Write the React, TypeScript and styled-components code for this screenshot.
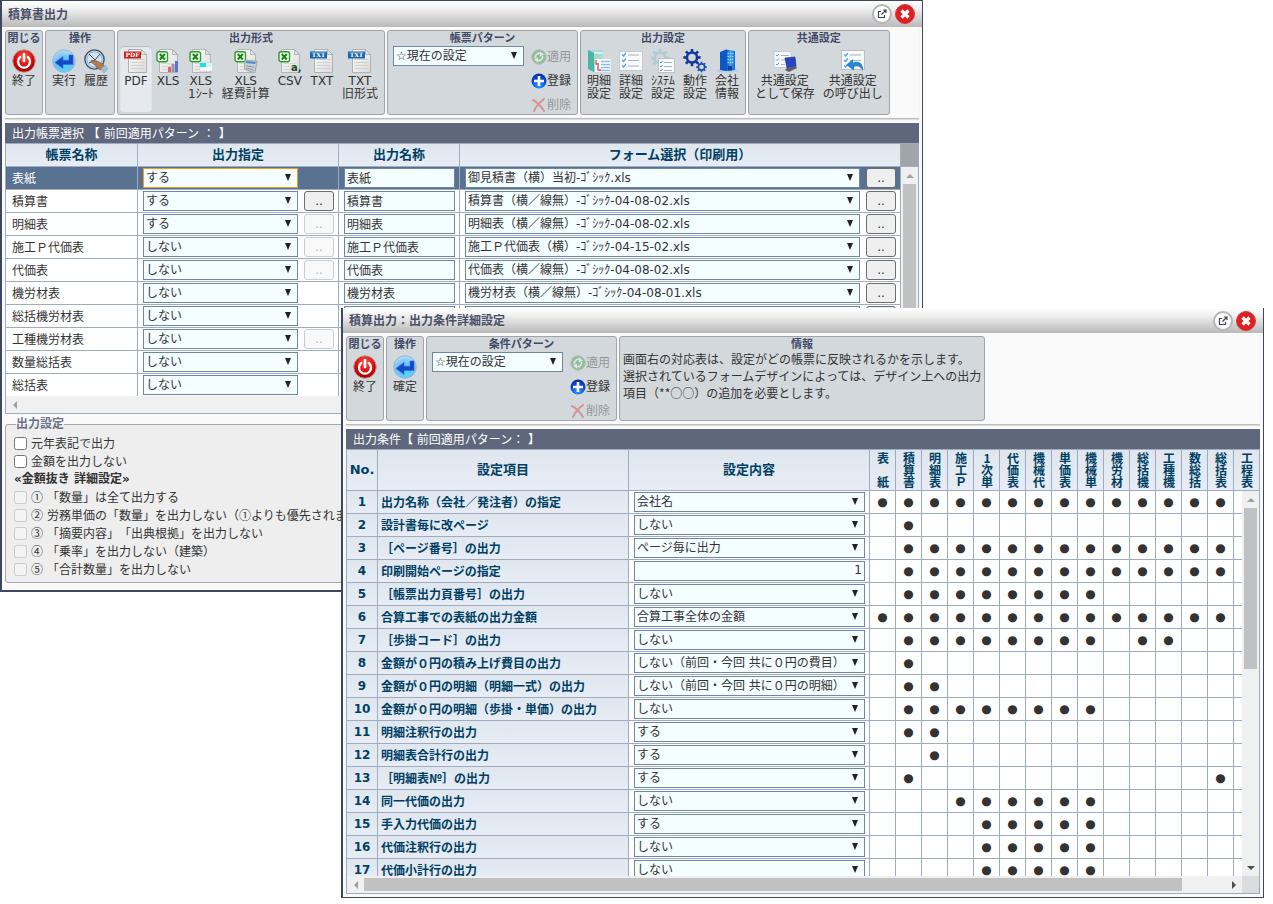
import React, { useId } from 'react';
import styled, { createGlobalStyle, css } from 'styled-components';

const latinFirst = '"DejaVu Sans", "Noto Sans CJK JP", sans-serif';
const kanjiFirst = '"Noto Sans CJK JP", "DejaVu Sans", sans-serif';

const color = {
  frame: '#3d4763',
  line: '#9dacc2',
  control: '#6f87a5',
  controlFill: '#f4fdff',
  heading: '#003f63',
  text: '#333333',
  caption: '#434a66',
  bar: '#5f677c',
};

const GlobalStyle = createGlobalStyle`
  *, *::before, *::after { box-sizing: border-box; }
  body {
    margin: 0;
    background: #ffffff;
    color: ${color.text};
    font: 12px/16px ${latinFirst};
    text-spacing-trim: space-all;
  }
  button, input, select { font: inherit; color: inherit; margin: 0; }
`;

/* ---------- windows ---------- */

const Desktop = styled.main`
  position: relative;
  min-height: 100vh;
  overflow: hidden;
`;

const WindowBox = styled.section<{ $place: 'back' | 'front' }>`
  position: absolute;
  background: #fafafa;
  border: solid ${color.frame};
  ${(p) =>
    p.$place === 'back'
      ? css`
          top: 0;
          left: 0;
          right: 350px;
          border-width: 1px 1px 2px 2px;
          padding-bottom: 7px;
        `
      : css`
          top: 308px;
          left: 341px;
          right: 9px;
          border-width: 0 1px 1px 2px;
          padding-bottom: 3px;
        `}
`;

const TitleBar = styled.header<{ $height: number }>`
  display: flex;
  align-items: center;
  gap: 3px;
  height: ${(p) => p.$height}px;
  padding: 0 7px 0 6px;
  background: linear-gradient(#ffffff, #f0f0f0 30%, #b9b9b9);
`;

const TitleText = styled.h1`
  flex: 1;
  margin: 0;
  padding-bottom: 1px;
  font: 700 12px/16px ${kanjiFirst};
  color: #4a5068;
`;

const RoundButton = styled.button<{ $danger?: boolean }>`
  display: grid;
  place-items: center;
  width: 20px;
  height: 20px;
  padding: 0;
  border: ${(p) => (p.$danger ? '1px solid #c84040' : '2px solid #b4b4b4')};
  border-radius: 50%;
  background: ${(p) => (p.$danger ? '#e02020' : '#ffffff')};
`;

const WindowBody = styled.div`
  padding: 0 3px;
`;

/* ---------- toolbar ---------- */

const Toolbar = styled.div`
  display: flex;
  gap: 2px;
  margin-bottom: 4px;
  padding: 3px 0;
  border-bottom: 1px solid #bcbcbc;
  box-shadow: 0 1px 1px #dddddd;
`;

const Group = styled.div`
  height: 85px;
  flex: none;
  border: 1px solid #a0a4a9;
  border-radius: 3px;
  background: #d3d8dc;
`;

const GroupTitle = styled.h2`
  margin: 0;
  font: 700 11px/13px ${kanjiFirst};
  text-align: center;
  color: ${color.caption};
  white-space: nowrap;
`;

const Tools = styled.div`
  display: flex;
  padding: 2px 2px 0;
`;

const ToolButton = styled.button<{ $active?: boolean }>`
  display: flex;
  flex-direction: column;
  align-items: center;
  gap: 2px;
  min-width: 32px;
  height: 66px;
  padding: 3px 4px 0;
  border: 0;
  border-radius: 4px;
  background: ${(p) => (p.$active ? '#e6eaef' : 'none')};
  box-shadow: ${(p) => (p.$active ? 'inset 0 1px 1px #b4b9be' : 'none')};
  line-height: 13px;
  white-space: pre;
  text-align: center;
`;

const Icon = styled.svg`
  display: block;
  flex: none;
  width: 24px;
  height: 24px;
`;

const SmallIcon = styled(Icon)`
  width: 16px;
  height: 16px;
`;

const Glyph = styled(Icon)<{ $size: number }>`
  width: ${(p) => p.$size}px;
  height: ${(p) => p.$size}px;
`;

const PatternRow = styled.div`
  display: flex;
  align-items: flex-start;
  gap: 7px;
  padding: 2px 5px 0;
`;

const PatternButtons = styled.div`
  display: flex;
  flex-direction: column;
`;

const PatternButton = styled.button`
  display: flex;
  align-items: center;
  height: 24px;
  padding: 0 1px 2px 0;
  border: 0;
  background: none;
  &:disabled { opacity: 0.4; }
`;

const InfoText = styled.p`
  margin: 0;
  padding: 0 3px;
  line-height: 17px;
  font-family: ${kanjiFirst};
  white-space: pre;
`;

/* ---------- form controls ---------- */

const SelectBox = styled.span<{ $width?: number; $focus?: boolean }>`
  position: relative;
  display: block;
  ${(p) => (p.$width ? `flex: none; width: ${p.$width}px;` : 'flex: 1; min-width: 0;')}
  height: 20px;
  border: 1px solid ${(p) => (p.$focus ? '#f0a010' : color.control)};
  background: ${color.controlFill};
  &::after {
    content: '';
    position: absolute;
    top: 5px;
    right: 6px;
    border: solid transparent;
    border-width: 7px 3px 0;
    border-top-color: #222222;
    pointer-events: none;
  }
`;

const NativeSelect = styled.select`
  display: block;
  appearance: none;
  width: 100%;
  height: 18px;
  padding: 0 18px 0 2px;
  border: 0;
  outline: 0;
  background: transparent;
  line-height: 18px;
`;

const TextBox = styled.input<{ $right?: boolean }>`
  display: block;
  width: 100%;
  height: 20px;
  padding: 0 2px 2px;
  border: 1px solid ${color.control};
  background: ${color.controlFill};
  text-align: ${(p) => (p.$right ? 'right' : 'left')};
`;

const DotsButton = styled.button`
  flex: none;
  width: 30px;
  height: 20px;
  padding: 0;
  border: 1px solid #6c6c6c;
  border-radius: 3px;
  background: #efefef;
  line-height: 18px;
  &:disabled {
    border-color: #cccccc;
    background: #f9f9f9;
    color: #b5b5b5;
  }
`;

const Controls = styled.div`
  display: flex;
  gap: 6px;
`;

/* ---------- lists ---------- */

const SectionBar = styled.h2`
  height: 20px;
  margin: 0;
  padding: 2px 7px 0;
  background: ${color.bar};
  color: #ffffff;
  font: 12px/18px ${latinFirst};
  white-space: nowrap;
`;

const Frame = styled.div`
  border: 1px solid ${color.line};
  background: #ffffff;
`;

const Viewport = styled.div<{ $height: number }>`
  position: relative;
  height: ${(p) => p.$height}px;
  overflow: hidden;
`;

const Table = styled.table`
  width: 100%;
  table-layout: fixed;
  border-collapse: separate;
  border-spacing: 0;
`;

const Column = styled.col<{ $width?: number }>`
  width: ${(p) => (p.$width ? `${p.$width}px` : 'auto')};
`;

const HeadCell = styled.th<{ $height: number; $blank?: boolean }>`
  height: ${(p) => p.$height}px;
  padding: 0;
  border-right: 1px solid ${color.line};
  border-bottom: 1px solid ${color.line};
  background: ${(p) => (p.$blank ? '#a0a5aa' : 'linear-gradient(#dfe6ee, #e8edf5)')};
  color: ${color.heading};
  font-size: 13px;
  line-height: 16px;
  &:last-child { border-right: 0; }
`;

const UprightText = styled.span`
  display: inline-block;
  writing-mode: vertical-rl;
  text-orientation: upright;
  font: 700 12px/16px ${kanjiFirst};
  white-space: pre;
  vertical-align: middle;
`;

const Row = styled.tr<{ $selected?: boolean }>`
  background: ${(p) => (p.$selected ? '#5a7292' : '#ffffff')};
  color: ${(p) => (p.$selected ? '#ffffff' : 'inherit')};
`;

const Cell = styled.td`
  height: 23px;
  padding: 0 4px 0 5px;
  border-right: 1px solid ${color.line};
  border-bottom: 1px solid ${color.line};
  &:last-child { border-right: 0; }
`;

const NameCell = styled(Cell).attrs({ as: 'th', scope: 'row' })`
  padding: 0 4px 1px 6px;
  font-family: ${kanjiFirst};
  font-weight: 400;
  text-align: left;
  white-space: nowrap;
`;

const ControlCell = styled(Cell)`
  color: ${color.text};
`;

const NumberCell = styled(Cell)`
  padding: 0;
  background: linear-gradient(#dfe6ee, #e8edf5);
  color: ${color.heading};
  font-weight: 700;
  text-align: center;
`;

const ItemCell = styled(NameCell)`
  padding-left: 3px;
  background: linear-gradient(#dfe6ee, #e8edf5);
  color: ${color.heading};
  font-weight: 700;
`;

const MarkCell = styled(Cell)`
  padding: 0;
  text-align: center;
`;

/* ---------- scrollbars ---------- */

const VerticalTrack = styled.div<{ $top: number }>`
  position: absolute;
  top: ${(p) => p.$top}px;
  right: 0;
  bottom: 0;
  display: flex;
  flex-direction: column;
  width: 17px;
  background: #f0f0f0;
`;

const HorizontalTrack = styled.div`
  display: flex;
  flex: 1;
  height: 17px;
  background: #f0f0f0;
`;

const Lane = styled.div`
  flex: 1;
`;

const VerticalThumb = styled.div<{ $share: number }>`
  height: ${(p) => p.$share}%;
  margin: 0 2px;
  background: #c1c1c1;
`;

const HorizontalThumb = styled.div<{ $share: number }>`
  width: ${(p) => p.$share}%;
  height: 13px;
  margin: 2px 0;
  background: #c1c1c1;
`;

const ArrowBox = styled.div`
  display: grid;
  place-items: center;
  width: 17px;
  height: 17px;
`;

const ScrollRow = styled.div`
  display: flex;
`;

const Corner = styled.div`
  width: 17px;
  height: 17px;
  background: #dcdcdc;
`;

/* ---------- output options ---------- */

const OptionSet = styled.fieldset`
  margin: 2px 0 0;
  padding: 2px 8px 4px;
  border: 1px solid #a5a8ab;
  border-radius: 3px;
  background: #eeeeee;
`;

const OptionLegend = styled.legend`
  margin-left: 2px;
  padding: 0;
  line-height: 16px;
  font-weight: 700;
  color: #6a7288;
`;

const Option = styled.label`
  display: flex;
  align-items: center;
  gap: 4px;
  height: 18px;
  font-family: ${kanjiFirst};
  line-height: 16px;
  white-space: nowrap;
`;

const CheckBox = styled.input`
  flex: none;
  width: 13px;
  height: 13px;
`;

const OptionHeading = styled.h3`
  margin: 0;
  font: 700 12px/18px ${latinFirst};
`;

/* ---------- icons ---------- */

const Gradients = () => (
  <Glyph $size={0} aria-hidden>
    <defs>
      <radialGradient id="red" cx="50%" cy="30%" r="70%">
        <stop offset="0" stopColor="#ff5a4a" />
        <stop offset="0.6" stopColor="#d80808" />
        <stop offset="1" stopColor="#a00000" />
      </radialGradient>
      <radialGradient id="sky" cx="50%" cy="75%" r="75%">
        <stop offset="0" stopColor="#4ed4ff" />
        <stop offset="0.6" stopColor="#74c4f6" />
        <stop offset="1" stopColor="#b4def8" />
      </radialGradient>
      <radialGradient id="blue" cx="50%" cy="80%" r="85%">
        <stop offset="0" stopColor="#2ea2ff" />
        <stop offset="0.6" stopColor="#0845d2" />
        <stop offset="1" stopColor="#062a96" />
      </radialGradient>
      <linearGradient id="paper" x1="0" y1="0" x2="1" y2="1">
        <stop offset="0" stopColor="#ffffff" />
        <stop offset="1" stopColor="#dadada" />
      </linearGradient>
      <linearGradient id="tower" x1="0" y1="0" x2="1" y2="0">
        <stop offset="0" stopColor="#0a4fc0" />
        <stop offset="0.5" stopColor="#38a4f6" />
        <stop offset="1" stopColor="#1266d8" />
      </linearGradient>
    </defs>
  </Glyph>
);

const PowerIcon = () => (
  <Icon viewBox="0 0 24 24" aria-hidden>
    <circle cx="12" cy="12" r="11.3" fill="url(#red)" stroke="#b9a3a3" />
    <path d="M8.2 8A6 6 0 1 0 15.8 8" fill="none" stroke="#fff" strokeWidth="2.4" strokeLinecap="round" />
    <path d="M12 5v7" stroke="#fff" strokeWidth="2.6" strokeLinecap="round" />
  </Icon>
);

const EnterIcon = () => (
  <Icon viewBox="0 0 24 24" aria-hidden>
    <circle cx="12" cy="12" r="11.3" fill="url(#sky)" stroke="#9fb4c8" />
    <path d="M17 6h4v9.500h-10v4L3 13.500l8-6v3.700h6z" fill="#1648c8" stroke="#2e6be0" strokeWidth="0.6" />
  </Icon>
);

const HistoryIcon = () => (
  <Icon viewBox="0 0 24 24" aria-hidden>
    <circle cx="10.500" cy="10.500" r="9.600" fill="#cfe4f5" stroke="#4a4f58" strokeWidth="1.400" />
    <circle cx="10.500" cy="10.500" r="7.600" fill="none" stroke="#7cb4e4" strokeWidth="1" />
    <path d="M5 5l6 6 5-6M11 11l-6 3" stroke="#444" strokeWidth="1" fill="none" />
    <path d="M7 11.500l6 0.500 6 3 1 3-3 3-4-2-2-3-4-3z" fill="#b47c50" stroke="#7a4c2c" strokeWidth="0.6" />
    <path d="M17 20l4-4 3 4-4 4z" fill="#9fc0d2" stroke="#7d96a4" strokeWidth="0.5" />
  </Icon>
);

const Paper = () => (
  <>
    <path d="M4.500 0.500h13l5 5v18h-18z" fill="url(#paper)" stroke="#b0b0b0" />
    <path d="M17.500 0.500v5h5z" fill="#e2e2e2" stroke="#a8a8a8" strokeWidth="0.8" />
    <path d="M6.500 10.500h14M6.500 13.500h14M6.500 16.500h14M6.500 19.500h14" stroke="#cfcfcf" />
  </>
);

const TagIcon = ({ tag, fill }: { tag: string; fill: string }) => (
  <Icon viewBox="0 0 24 24" aria-hidden>
    <Paper />
    <rect x="0" y="2.500" width="17" height="7" fill={fill} />
    <text x="8.500" y="8.200" fontSize="6" fontWeight="700" fontFamily="DejaVu Serif, serif" textAnchor="middle" fill="#fff">
      {tag}
    </text>
  </Icon>
);

const SheetIcon = ({ kind }: { kind: 'chart' | 'sheet' | 'calc' | 'csv' }) => (
  <Icon viewBox="0 0 24 24" aria-hidden>
    <path d="M3.500 0.500h13l5 5v18h-18z" fill="url(#paper)" stroke="#b4b4b4" />
    <path d="M16.500 0.500v5h5z" fill="#e2e2e2" stroke="#a8a8a8" strokeWidth="0.8" />
    <path d="M5.500 14.500h13M5.500 17.500h13M5.500 20.500h13" stroke="#d4d4d4" />
    <rect x="1" y="2.700" width="10.500" height="10" rx="2" fill="#f3fff0" stroke="#2c9a2c" strokeWidth="1.400" />
    <path d="M3.800 5l5 5.500M8.800 5l-5 5.500" stroke="#168516" strokeWidth="2" />
    {kind === 'chart' && (
      <>
        <rect x="12" y="18" width="3" height="5" fill="#d46a6a" />
        <rect x="15.500" y="15" width="3" height="8" fill="#9a90a8" />
        <rect x="19" y="12" width="3" height="11" fill="#5a74cc" />
      </>
    )}
    {kind === 'sheet' && (
      <>
        <rect x="11" y="14" width="12.500" height="8" fill="#fff" stroke="#b4d0dc" strokeWidth="0.6" />
        <rect x="11" y="14" width="6" height="4" fill="#22dcf0" />
        <rect x="17" y="14" width="6.500" height="4" fill="#d2f4fa" />
      </>
    )}
    {kind === 'calc' && (
      <>
        <path d="M11 11l12 1-1.500 9-4 2-7-3z" fill="#c8d0d8" stroke="#8c949c" strokeWidth="0.7" />
        <path d="M12 13l9.500 1" stroke="#4c88c8" strokeWidth="2" />
        <path d="M12 17l8 1M12 19.500l7 1" stroke="#8e979f" />
      </>
    )}
    {kind === 'csv' && (
      <text x="13" y="22" fontSize="10" fontWeight="700" fontFamily="DejaVu Sans, sans-serif" fill="#1c4a28">
        a,
      </text>
    )}
  </Icon>
);

const CheckLines = () => (
  <>
    <path d="M3 5.500l1.500 1.500 2.500-3M3 11l1.500 1.500 2.500-3M3 16.500l1.500 1.500 2.500-3" fill="none" stroke="#4ba2dc" strokeWidth="1.200" />
    <path d="M9 6h11M9 11.500h11M9 17h11" stroke="#a8b2bc" strokeWidth="1.200" />
  </>
);

const FolderListIcon = () => (
  <Icon viewBox="0 0 24 24" aria-hidden>
    <path d="M1 1h15v19l-9 3-6-3z" fill="#a4dcd2" />
    <path d="M1 1l6 3v19l-6-3z" fill="#4cb4a2" />
    <path d="M7 4h9" stroke="#d4f1ec" strokeWidth="2" />
    <rect x="8" y="10" width="15.500" height="13" fill="#fff" />
    <path d="M14 12.500h9M14 15.500h9M14 18.500h9M14 21.500h9" stroke="#8cbce8" strokeWidth="1.300" />
    <path d="M9 11v4h3M11 16v5h3" fill="none" stroke="#d84a4a" strokeWidth="1.300" />
  </Icon>
);

const ListIcon = () => (
  <Icon viewBox="0 0 24 24" aria-hidden>
    <rect x="0.500" y="2.500" width="23" height="19" fill="#f8fafb" stroke="#c8ccd0" />
    <CheckLines />
  </Icon>
);

const gearTeeth = [0, 45, 90, 135, 180, 225, 270, 315];

const Gear = ({ x, y, r, fill }: { x: number; y: number; r: number; fill: string }) => (
  <g transform={`translate(${x} ${y})`} fill={fill}>
    {gearTeeth.map((a) => (
      <rect key={a} x={-r / 5} y={-r - r / 3} width={r / 2.5} height={r / 2} transform={`rotate(${a})`} />
    ))}
    <circle r={r * 0.78} fill="none" stroke={fill} strokeWidth={r * 0.4} />
  </g>
);

const SystemIcon = () => (
  <Icon viewBox="0 0 24 24" aria-hidden>
    <Gear x={9} y={9} r={7} fill="#b4cad6" />
    <rect x="7.500" y="9.500" width="16" height="14" fill="#f8fafb" stroke="#bcc2c8" />
    <path d="M9 13l1 1 1.500-2M9 17l1 1 1.500-2M9 21l1 1 1.500-2" fill="none" stroke="#4ba2dc" />
    <path d="M13 13.500h8M13 17.500h8M13 21.500h8" stroke="#a8b2bc" />
  </Icon>
);

const GearsIcon = () => (
  <Icon viewBox="0 0 24 24" aria-hidden>
    <Gear x={9} y={8.5} r={6.5} fill="#12389e" />
    <Gear x={18.5} y={18} r={4} fill="#1c4cb4" />
  </Icon>
);

const BuildingIcon = () => (
  <Icon viewBox="0 0 24 24" aria-hidden>
    <ellipse cx="12" cy="21.500" rx="11" ry="2.300" fill="#bccfe2" />
    <path d="M5 3l6-2.500v21.500l-6-1z" fill="#0d56c4" />
    <path d="M11 0.500l9 1.500v19l-9 1z" fill="url(#tower)" />
    <path d="M12.500 4.500h6M12.500 7.500h6M12.500 10.500h6M12.500 13.500h6" stroke="#8fd4ff" strokeWidth="1.400" strokeDasharray="1.600 0.700" />
    <rect x="13" y="17" width="4" height="4.500" fill="#0b3f9c" />
  </Icon>
);

const SaveSharedIcon = () => (
  <Icon viewBox="0 0 24 24" aria-hidden>
    <rect x="1" y="2.500" width="17" height="16" fill="#f6f8fa" stroke="#c8ccd0" />
    <path d="M3 6l1 1 2-2M3 10.500l1 1 2-2M3 15l1 1 2-2" fill="none" stroke="#4ba2dc" />
    <path d="M8 6.500h8M8 11h6M8 15.500h4" stroke="#a8b2bc" />
    <path d="M12 9l10-1 1 9-9 2z" fill="#2446c4" stroke="#18246c" strokeWidth="0.6" />
    <path d="M14 19l9-2 1 2-8 4-4-2z" fill="#5a5f6c" />
  </Icon>
);

const LoadSharedIcon = () => (
  <Icon viewBox="0 0 24 24" aria-hidden>
    <rect x="0.500" y="1.500" width="23" height="19" fill="#f8fafb" stroke="#b8bec4" />
    <CheckLines />
    <path d="M22 22c1-8-5-11-10-8.500V10l-7 6 8 5.500v-3.500c3-2 6-1 9 4z" fill="#2a84d8" />
  </Icon>
);

const ApplyIcon = () => (
  <SmallIcon viewBox="0 0 16 16" aria-hidden>
    <circle cx="8" cy="8" r="7.200" fill="#2f9a44" stroke="#6a9a74" />
    <path d="M4.500 9A3.800 3.800 0 0 1 10 4.800M11.500 7A3.800 3.800 0 0 1 6 11.200" fill="none" stroke="#fff" strokeWidth="1.600" />
    <path d="M9 2.500l4 3-4 2zM7 13.500l-4-3 4-2z" fill="#fff" />
  </SmallIcon>
);

const AddIcon = () => (
  <SmallIcon viewBox="0 0 16 16" aria-hidden>
    <circle cx="8" cy="8" r="7.500" fill="url(#blue)" />
    <path d="M8 3v10M3 8h10" stroke="#fff" strokeWidth="2.600" />
  </SmallIcon>
);

const DeleteIcon = () => (
  <SmallIcon viewBox="0 0 16 16" aria-hidden>
    <path d="M2 3c4 2 8 6 11 11M13 2C9 5 5 9 3 14" fill="none" stroke="#d83030" strokeWidth="2" strokeLinecap="round" />
  </SmallIcon>
);

type Direction = 'up' | 'down' | 'left' | 'right';
const arrowPath: Record<Direction, string> = {
  up: 'M0 6l4-4 4 4z',
  down: 'M0 2l4 4 4-4z',
  left: 'M6 0L2 4l4 4z',
  right: 'M2 0l4 4-4 4z',
};

const Arrow = ({ to, live }: { to: Direction; live?: boolean }) => (
  <ArrowBox>
    <Glyph $size={8} viewBox="0 0 8 8" aria-hidden>
      <path d={arrowPath[to]} fill={live ? '#4d4d4d' : '#a0a0a0'} />
    </Glyph>
  </ArrowBox>
);

/* ---------- shared parts ---------- */

const TitleRow = ({ title, height }: { title: string; height: number }) => (
  <TitleBar $height={height}>
    <TitleText>{title}</TitleText>
    <RoundButton type="button" aria-label="別ウィンドウで開く">
      <Glyph $size={10} viewBox="0 0 10 10" aria-hidden>
        <path d="M4 2.500H1.500v6h6V6M6 1h3v3M9 1L4.500 5.500" fill="none" stroke="#3c4257" strokeWidth="1.200" />
      </Glyph>
    </RoundButton>
    <RoundButton type="button" $danger aria-label="閉じる">
      <Glyph $size={12} viewBox="0 0 12 12" aria-hidden>
        <path d="M2.500 2.500l7 7M9.500 2.500l-7 7" stroke="#fff" strokeWidth="3.200" />
      </Glyph>
    </RoundButton>
  </TitleBar>
);

interface Tool {
  label: string;
  icon: React.ReactNode;
  active?: boolean;
}

const ToolGroup = ({ title, tools }: { title: string; tools: Tool[] }) => (
  <Group>
    <GroupTitle>{title}</GroupTitle>
    <Tools>
      {tools.map((t) => (
        <ToolButton key={t.label} type="button" $active={t.active}>
          {t.icon}
          {t.label}
        </ToolButton>
      ))}
    </Tools>
  </Group>
);

const Select = ({ label, value, width, focus }: { label: string; value: string; width?: number; focus?: boolean }) => (
  <SelectBox $width={width} $focus={focus}>
    <NativeSelect aria-label={label} defaultValue={value}>
      <option>{value}</option>
    </NativeSelect>
  </SelectBox>
);

const PatternGroup = ({ title }: { title: string }) => (
  <Group>
    <GroupTitle>{title}</GroupTitle>
    <PatternRow>
      <Select label={title} value="☆現在の設定" width={131} />
      <PatternButtons>
        <PatternButton type="button" disabled><ApplyIcon />適用</PatternButton>
        <PatternButton type="button"><AddIcon />登録</PatternButton>
        <PatternButton type="button" disabled><DeleteIcon />削除</PatternButton>
      </PatternButtons>
    </PatternRow>
  </Group>
);

/* ---------- data ---------- */

const outputTools: Tool[] = [
  { label: 'PDF', icon: <TagIcon tag="PDF" fill="#c81e1e" />, active: true },
  { label: 'XLS', icon: <SheetIcon kind="chart" /> },
  { label: 'XLS\n1ｼｰﾄ', icon: <SheetIcon kind="sheet" /> },
  { label: 'XLS\n経費計算', icon: <SheetIcon kind="calc" /> },
  { label: 'CSV', icon: <SheetIcon kind="csv" /> },
  { label: 'TXT', icon: <TagIcon tag="TXT" fill="#1a66ac" /> },
  { label: 'TXT\n旧形式', icon: <TagIcon tag="TXT" fill="#1a66ac" /> },
];

const settingTools: Tool[] = [
  { label: '明細\n設定', icon: <FolderListIcon /> },
  { label: '詳細\n設定', icon: <ListIcon /> },
  { label: 'ｼｽﾃﾑ\n設定', icon: <SystemIcon /> },
  { label: '動作\n設定', icon: <GearsIcon /> },
  { label: '会社\n情報', icon: <BuildingIcon /> },
];

const sharedTools: Tool[] = [
  { label: '共通設定\nとして保存', icon: <SaveSharedIcon /> },
  { label: '共通設定\nの呼び出し', icon: <LoadSharedIcon /> },
];

interface Report {
  name: string;
  output: string;
  detail?: 'on' | 'off';
  form?: string;
}

const reports: Report[] = [
  { name: '表紙', output: 'する', form: '御見積書（横）当初-ｺﾞｼｯｸ.xls' },
  { name: '積算書', output: 'する', detail: 'on', form: '積算書（横／線無）-ｺﾞｼｯｸ-04-08-02.xls' },
  { name: '明細表', output: 'する', detail: 'off', form: '明細表（横／線無）-ｺﾞｼｯｸ-04-08-02.xls' },
  { name: '施工Ｐ代価表', output: 'しない', detail: 'off', form: '施工Ｐ代価表（横）-ｺﾞｼｯｸ-04-15-02.xls' },
  { name: '代価表', output: 'しない', detail: 'off', form: '代価表（横／線無）-ｺﾞｼｯｸ-04-08-02.xls' },
  { name: '機労材表', output: 'しない', form: '機労材表（横／線無）-ｺﾞｼｯｸ-04-08-01.xls' },
  { name: '総括機労材表', output: 'しない', form: '' },
  { name: '工種機労材表', output: 'しない', detail: 'off' },
  { name: '数量総括表', output: 'しない' },
  { name: '総括表', output: 'しない' },
];

const priceOptions = [
  ['①', '「数量」は全て出力する'],
  ['②', '労務単価の「数量」を出力しない（①よりも優先されます）'],
  ['③', '「摘要内容」「出典根拠」を出力しない'],
  ['④', '「乗率」を出力しない（建築）'],
  ['⑤', '「合計数量」を出力しない'],
];

const targets = [
  '表　紙', '積算書', '明細表', '施工Ｐ', '1次単', '代価表', '機械代', '単価表',
  '機械単', '機労材', '総括機', '工種機', '数総括', '総括表', '工程表',
];

interface Condition {
  name: string;
  value: string;
  marks: string;
  text?: boolean;
}

/* marks: one character per target report, "o" where the setting applies */
const conditions: Condition[] = [
  { name: '出力名称（会社／発注者）の指定', value: '会社名', marks: 'oooooooooooooo-' },
  { name: '設計書毎に改ページ', value: 'しない', marks: '-o-------------' },
  { name: '［ページ番号］の出力', value: 'ページ毎に出力', marks: '-ooooooooooooo-' },
  { name: '印刷開始ページの指定', value: '1', marks: '-ooooooooooooo-', text: true },
  { name: '［帳票出力頁番号］の出力', value: 'しない', marks: '-oooooooo------' },
  { name: '合算工事での表紙の出力金額', value: '合算工事全体の金額', marks: 'oooooooooooooo-' },
  { name: '［歩掛コード］の出力', value: 'しない', marks: '-oooooooo-oo---' },
  { name: '金額が０円の積み上げ費目の出力', value: 'しない（前回・今回 共に０円の費目）', marks: '-o-------------' },
  { name: '金額が０円の明細（明細一式）の出力', value: 'しない（前回・今回 共に０円の明細）', marks: '-oo------------' },
  { name: '金額が０円の明細（歩掛・単価）の出力', value: 'しない', marks: '-oooooooo------' },
  { name: '明細注釈行の出力', value: 'する', marks: '-oo------------' },
  { name: '明細表合計行の出力', value: 'する', marks: '--o------------' },
  { name: '［明細表№］の出力', value: 'する', marks: '-o-----------o-' },
  { name: '同一代価の出力', value: 'しない', marks: '---oooooo------' },
  { name: '手入力代価の出力', value: 'する', marks: '----ooooo------' },
  { name: '代価注釈行の出力', value: 'しない', marks: '----ooooo------' },
  { name: '代価小計行の出力', value: 'しない', marks: '----ooooo------' },
];

/* ---------- screens ---------- */

const ReportTable = () => (
  <Frame>
    <Viewport $height={252}>
      <Table>
        <colgroup>
          <Column $width={132} />
          <Column $width={201} />
          <Column $width={121} />
          <Column />
          <Column $width={17} />
        </colgroup>
        <thead>
          <tr>
            <HeadCell $height={23}>帳票名称</HeadCell>
            <HeadCell $height={23}>出力指定</HeadCell>
            <HeadCell $height={23}>出力名称</HeadCell>
            <HeadCell $height={23}>フォーム選択（印刷用）</HeadCell>
            <HeadCell $height={23} $blank />
          </tr>
        </thead>
        <tbody>
          {reports.map((r, i) => (
            <Row key={r.name} $selected={i === 0}>
              <NameCell>{r.name}</NameCell>
              <ControlCell>
                <Controls>
                  <Select label={`${r.name} 出力指定`} value={r.output} width={155} focus={i === 0} />
                  {r.detail && (
                    <DotsButton type="button" disabled={r.detail === 'off'} aria-label={`${r.name} 出力指定の詳細`}>..</DotsButton>
                  )}
                </Controls>
              </ControlCell>
              <ControlCell>
                {r.form !== undefined && (
                  <TextBox aria-label={`${r.name} 出力名称`} defaultValue={r.name} />
                )}
              </ControlCell>
              <ControlCell>
                {r.form !== undefined && (
                  <Controls>
                    <Select label={`${r.name} フォーム選択`} value={r.form} />
                    <DotsButton type="button" aria-label={`${r.name} フォームの参照`}>..</DotsButton>
                  </Controls>
                )}
              </ControlCell>
              <Cell />
            </Row>
          ))}
        </tbody>
      </Table>
      <VerticalTrack $top={23}>
        <Arrow to="up" />
        <Lane><VerticalThumb $share={80} /></Lane>
        <Arrow to="down" live />
      </VerticalTrack>
    </Viewport>
    <ScrollRow>
      <HorizontalTrack>
        <Arrow to="left" />
        <Lane />
        <Arrow to="right" />
      </HorizontalTrack>
      <Corner />
    </ScrollRow>
  </Frame>
);

const ConditionTable = () => (
  <Frame>
    <Viewport $height={426}>
      <Table>
        <colgroup>
          <Column $width={31} />
          <Column $width={251} />
          <Column />
          {targets.map((t, i) => (
            <Column key={t} $width={i === targets.length - 1 ? 25 : 26} />
          ))}
        </colgroup>
        <thead>
          <tr>
            <HeadCell $height={41}>No.</HeadCell>
            <HeadCell $height={41}>設定項目</HeadCell>
            <HeadCell $height={41}>設定内容</HeadCell>
            {targets.map((t) => (
              <HeadCell key={t} $height={41}><UprightText>{t}</UprightText></HeadCell>
            ))}
          </tr>
        </thead>
        <tbody>
          {conditions.map((c, i) => (
            <Row key={c.name}>
              <NumberCell>{i + 1}</NumberCell>
              <ItemCell>{c.name}</ItemCell>
              <ControlCell>
                {c.text ? (
                  <TextBox $right aria-label={c.name} defaultValue={c.value} />
                ) : (
                  <Controls><Select label={c.name} value={c.value} /></Controls>
                )}
              </ControlCell>
              {targets.map((t, n) => (
                <MarkCell key={t}>{c.marks[n] === 'o' ? '●' : ''}</MarkCell>
              ))}
            </Row>
          ))}
        </tbody>
      </Table>
      <VerticalTrack $top={41}>
        <Arrow to="up" />
        <Lane><VerticalThumb $share={46} /></Lane>
        <Arrow to="down" live />
      </VerticalTrack>
    </Viewport>
    <ScrollRow>
      <HorizontalTrack>
        <Arrow to="left" />
        <Lane><HorizontalThumb $share={95} /></Lane>
        <Arrow to="right" live />
      </HorizontalTrack>
      <Corner />
    </ScrollRow>
  </Frame>
);

const OutputOptions = () => {
  const id = useId();
  return (
    <OptionSet>
      <OptionLegend>出力設定</OptionLegend>
      <Option htmlFor={`${id}-era`}><CheckBox id={`${id}-era`} type="checkbox" />元年表記で出力</Option>
      <Option htmlFor={`${id}-price`}><CheckBox id={`${id}-price`} type="checkbox" />金額を出力しない</Option>
      <OptionHeading>«金額抜き 詳細設定»</OptionHeading>
      {priceOptions.map(([mark, text], i) => (
        <Option key={mark} htmlFor={`${id}-${i}`}>
          <CheckBox id={`${id}-${i}`} type="checkbox" disabled />
          <span>{mark}</span>
          <span>{text}</span>
        </Option>
      ))}
    </OptionSet>
  );
};

export default function App() {
  return (
    <Desktop>
      <GlobalStyle />
      <WindowBox $place="back">
        <Gradients />
        <TitleRow title="積算書出力" height={26} />
        <WindowBody>
          <Toolbar>
            <ToolGroup title="閉じる" tools={[{ label: '終了', icon: <PowerIcon /> }]} />
            <ToolGroup title="操作" tools={[{ label: '実行', icon: <EnterIcon /> }, { label: '履歴', icon: <HistoryIcon /> }]} />
            <ToolGroup title="出力形式" tools={outputTools} />
            <PatternGroup title="帳票パターン" />
            <ToolGroup title="出力設定" tools={settingTools} />
            <ToolGroup title="共通設定" tools={sharedTools} />
          </Toolbar>
          <SectionBar>出力帳票選択 【 前回適用パターン ： 】</SectionBar>
          <ReportTable />
          <OutputOptions />
        </WindowBody>
      </WindowBox>
      <WindowBox $place="front">
        <TitleRow title="積算出力：出力条件詳細設定" height={25} />
        <WindowBody>
          <Toolbar>
            <ToolGroup title="閉じる" tools={[{ label: '終了', icon: <PowerIcon /> }]} />
            <ToolGroup title="操作" tools={[{ label: '確定', icon: <EnterIcon /> }]} />
            <PatternGroup title="条件パターン" />
            <Group>
              <GroupTitle>情報</GroupTitle>
              <InfoText>
                {'画面右の対応表は、設定がどの帳票に反映されるかを示します。\n選択されているフォームデザインによっては、デザイン上への出力\n項目（**○○）の追加を必要とします。'}
              </InfoText>
            </Group>
          </Toolbar>
          <SectionBar>出力条件【 前回適用パターン： 】</SectionBar>
          <ConditionTable />
        </WindowBody>
      </WindowBox>
    </Desktop>
  );
}
